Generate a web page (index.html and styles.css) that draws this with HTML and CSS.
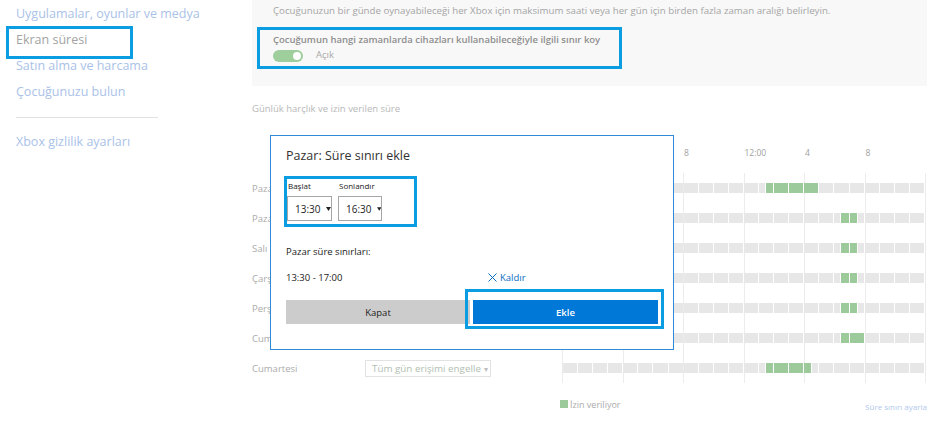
FILE: index.html
```html
<!DOCTYPE html>
<html lang="tr">
<head>
<meta charset="utf-8">
<title>Ekran süresi</title>
<link rel="stylesheet" href="styles.css">
</head>
<body>
<div class="page">
  <nav class="sidenav">
    <a class="nav-link">Uygulamalar, oyunlar ve medya</a>
    <a class="nav-link is-current">Ekran süresi</a>
    <a class="nav-link">Satın alma ve harcama</a>
    <a class="nav-link">Çocuğunuzu bulun</a>
    <hr class="nav-divider">
    <a class="nav-link">Xbox gizlilik ayarları</a>
  </nav>

  <main class="main">
    <section class="panel">
      <p class="panel-desc">Çocuğunuzun bir günde oynayabileceği her Xbox için maksimum saati veya her gün için birden fazla zaman aralığı belirleyin.</p>
      <div class="limit-box">
        <div class="limit-title">Çocuğumun hangi zamanlarda cihazları kullanabileceğiyle ilgili sınır koy</div>
        <div class="toggle-row">
          <span class="toggle"><span class="toggle-knob"></span></span>
          <span class="toggle-label">Açık</span>
        </div>
      </div>
    </section>

    <h2 class="section-title">Günlük harçlık ve izin verilen süre</h2>

    <div class="schedule">
      <div class="schedule-head">
        <span></span>
        <span></span>
        <div class="hours"><span>12:00</span><span>4</span><span>8</span><span>12:00</span><span>4</span><span>8</span></div>
      </div>

      <div class="day-row is-covered">
        <span class="day-name">Pazar</span>
        <span class="day-select">Tüm gün erişimi engelle <span class="caret">▾</span></span>
        <div class="timeline"><i></i><i></i><i></i><i></i><i></i><i></i><i></i><i></i><i></i><i></i><i></i><i></i><i></i><i class="hg"></i><i class="g"></i><i class="g"></i><i class="g"></i><i></i><i></i><i></i><i></i><i></i><i></i><i></i></div>
      </div>
      <div class="day-row is-covered">
        <span class="day-name">Pazartesi</span>
        <span class="day-select">Tüm gün erişimi engelle <span class="caret">▾</span></span>
        <div class="timeline"><i></i><i></i><i></i><i></i><i></i><i></i><i></i><i></i><i></i><i></i><i></i><i></i><i></i><i></i><i></i><i></i><i></i><i></i><i class="hg"></i><i class="gh"></i><i></i><i></i><i></i><i></i></div>
      </div>
      <div class="day-row is-covered">
        <span class="day-name">Salı</span>
        <span class="day-select">Tüm gün erişimi engelle <span class="caret">▾</span></span>
        <div class="timeline"><i></i><i></i><i></i><i></i><i></i><i></i><i></i><i></i><i></i><i></i><i></i><i></i><i></i><i></i><i></i><i></i><i></i><i></i><i class="hg"></i><i class="gh"></i><i></i><i></i><i></i><i></i></div>
      </div>
      <div class="day-row is-covered">
        <span class="day-name">Çarşamba</span>
        <span class="day-select">Tüm gün erişimi engelle <span class="caret">▾</span></span>
        <div class="timeline"><i></i><i></i><i></i><i></i><i></i><i></i><i></i><i></i><i></i><i></i><i></i><i></i><i></i><i></i><i></i><i></i><i></i><i></i><i class="hg"></i><i class="gh"></i><i></i><i></i><i></i><i></i></div>
      </div>
      <div class="day-row is-covered">
        <span class="day-name">Perşembe</span>
        <span class="day-select">Tüm gün erişimi engelle <span class="caret">▾</span></span>
        <div class="timeline"><i></i><i></i><i></i><i></i><i></i><i></i><i></i><i></i><i></i><i></i><i></i><i></i><i></i><i></i><i></i><i></i><i></i><i></i><i class="hg"></i><i class="gh"></i><i></i><i></i><i></i><i></i></div>
      </div>
      <div class="day-row is-covered">
        <span class="day-name">Cuma</span>
        <span class="day-select">Tüm gün erişimi engelle <span class="caret">▾</span></span>
        <div class="timeline"><i></i><i></i><i></i><i></i><i></i><i></i><i></i><i></i><i></i><i></i><i></i><i></i><i></i><i></i><i></i><i></i><i></i><i></i><i class="hg"></i><i class="g"></i><i></i><i></i><i></i><i></i></div>
      </div>
      <div class="day-row">
        <span class="day-name">Cumartesi</span>
        <span class="day-select">Tüm gün erişimi engelle <span class="caret">▾</span></span>
        <div class="timeline"><i></i><i></i><i></i><i></i><i></i><i></i><i></i><i></i><i></i><i></i><i></i><i></i><i></i><i class="hg"></i><i class="g"></i><i class="g"></i><i class="gh"></i><i></i><i></i><i></i><i></i><i></i><i></i><i></i></div>
      </div>
    </div>

    <div class="legend">
      <span class="legend-key"><span class="legend-swatch"></span>İzin veriliyor</span>
      <a class="legend-link">Süre sınırı ayarla</a>
    </div>
  </main>

  <div class="dialog" role="dialog">
    <h1 class="dialog-title">Pazar: Süre sınırı ekle</h1>
    <div class="time-fields">
      <div class="field field-start">
        <span class="field-label">Başlat</span>
        <span class="select">13:30<svg class="select-caret" width="5" height="4" viewBox="0 0 5 4"><polygon points="0,0 5,0 2.5,4" fill="#222"/></svg></span>
      </div>
      <div class="field field-end">
        <span class="field-label">Sonlandır</span>
        <span class="select">16:30<svg class="select-caret" width="5" height="4" viewBox="0 0 5 4"><polygon points="0,0 5,0 2.5,4" fill="#222"/></svg></span>
      </div>
    </div>
    <p class="limits-title">Pazar süre sınırları:</p>
    <div class="limit-item">
      <span class="limit-range">13:30 - 17:00</span>
      <a class="remove-link"><svg width="9" height="9" viewBox="0 0 9 9"><path d="M0.5 0.5 L8.5 8.5 M8.5 0.5 L0.5 8.5" stroke="#0b6cc2" stroke-width="1" fill="none"/></svg>Kaldır</a>
    </div>
    <div class="dialog-actions">
      <button class="btn btn-secondary">Kapat</button>
      <button class="btn btn-primary">Ekle</button>
    </div>
  </div>
</div>
</body>
</html>
```

FILE: styles.css
```css
* { box-sizing: border-box; }

html, body {
  margin: 0;
  padding: 0;
  background: #fff;
}

body {
  font-family: "Open Sans", "Noto Sans", sans-serif;
  color: #a8a8a8;
  width: 948px;
  height: 429px;
  overflow: hidden;
}

.page {
  position: relative;
  display: flex;
  width: 948px;
  height: 429px;
}

/* ---------- side navigation ---------- */
.sidenav {
  width: 240px;
  flex: none;
  display: flex;
  flex-direction: column;
  padding: 1px 0 0 16px;
}

.nav-link {
  display: block;
  position: relative;
  height: 26px;
  line-height: 26px;
  font-size: 12.5px;
  color: #a9c2e8;
  text-decoration: none;
  white-space: nowrap;
}

.nav-link.is-current { color: #a3a3a3; }

.nav-link.is-current::after {
  content: "";
  position: absolute;
  left: -10px;
  top: -1px;
  width: 121px;
  height: 27px;
  border: 3px solid #0b9de2;
}

.nav-divider {
  width: 142px;
  height: 0;
  margin: 12px 0 11px;
  border: 0;
  border-top: 1px solid #e2e2e2;
}

/* ---------- main column ---------- */
.main {
  width: 675px;
  flex: none;
  margin-left: 12px;
}

.panel {
  background: #f8f8f8;
  height: 86px;
  padding-top: 3px;
}

.panel-desc {
  margin: 0 0 0 21px;
  font-size: 9.7px;
  line-height: 16px;
  color: #a5a5a5;
  white-space: nowrap;
}

.limit-box {
  margin: 8px 0 0 5px;
  width: 365px;
  height: 42px;
  border: 3px solid #0b9de2;
  padding: 2px 0 0 13px;
}

.limit-title {
  font-size: 9.5px;
  font-weight: 600;
  line-height: 16px;
  color: #8e8e8e;
  white-space: nowrap;
}

.toggle-row {
  display: flex;
  align-items: center;
  height: 13px;
  margin-top: 1px;
}

.toggle {
  display: flex;
  justify-content: flex-end;
  align-items: center;
  width: 30px;
  height: 12px;
  padding: 0 2px;
  border-radius: 6px;
  background: #9dce9c;
}

.toggle-knob {
  width: 8px;
  height: 8px;
  border-radius: 50%;
  background: #fff;
}

.toggle-label {
  margin-left: 13px;
  margin-top: -3px;
  font-size: 9.5px;
  color: #a8a8a8;
}

.section-title {
  margin: 16px 0 0;
  font-size: 9.5px;
  line-height: 14px;
  font-weight: 400;
  color: #b8b8b8;
}

/* ---------- schedule ---------- */
.schedule { margin-top: 27px; }

.schedule-head,
.day-row {
  display: grid;
  grid-template-columns: 113px 197px 364px;
}

.schedule-head {
  height: 20px;
  margin-bottom: 10px;
}

.hours {
  display: grid;
  grid-template-columns: repeat(6, 60.5px);
  font-size: 8.5px;
  line-height: 20px;
  color: #a0a0a0;
}

.hours span { padding-left: 1px; }

.day-row {
  height: 30px;
  align-items: center;
}

.day-name {
  font-size: 9.5px;
  color: #ababab;
}

.day-select {
  display: flex;
  align-items: center;
  width: 126px;
  height: 17px;
  padding: 0 5px 0 6px;
  border: 1px solid #e2e2e2;
  font-size: 9.8px;
  color: #b1beb1;
  white-space: nowrap;
}

/* the modal dialog hides these controls completely */
.day-row.is-covered .day-select { visibility: hidden; }

.caret {
  margin-left: 3px;
  font-size: 8px;
  color: #bdbdbd;
}

.timeline {
  align-self: stretch;
  display: grid;
  grid-template-columns: repeat(24, 1fr);
  column-gap: 1px;
  width: 364px;
  padding: 10px 2px 10px 1px;
  background: repeating-linear-gradient(to right, #ececec 0 1px, transparent 1px 60.5px);
}

.timeline i {
  display: block;
  background: #e7e7e7;
}

.timeline i.g { background: #9dca9b; }

.timeline i.hg {
  background: linear-gradient(to right, #e7e7e7 0 calc(50% - 1px), #fff calc(50% - 1px) 50%, #9dca9b 50%);
}

.timeline i.gh {
  background: linear-gradient(to right, #9dca9b 0 50%, #fff 50% calc(50% + 1px), #e7e7e7 calc(50% + 1px));
}

/* ---------- legend ---------- */
.legend {
  display: flex;
  justify-content: space-between;
  align-items: center;
  height: 14px;
  margin-top: 14px;
  padding-left: 308px;
}

.legend-key {
  display: flex;
  align-items: center;
  font-size: 9px;
  color: #ababab;
}

.legend-swatch {
  width: 8px;
  height: 8px;
  margin-right: 2px;
  background: #9dca9b;
}

.legend-link {
  margin-top: 4px;
  font-size: 8px;
  color: #b0c8ee;
}

/* ---------- dialog ---------- */
.dialog {
  position: absolute;
  left: 270px;
  top: 135px;
  width: 404px;
  height: 215px;
  padding: 11px 15px 0 15px;
  background: #fff;
  border: 1px solid #2f8bd8;
  color: #222;
}

.dialog-title {
  margin: 0;
  font-size: 12.5px;
  font-weight: 400;
  line-height: 18px;
  color: #333;
}

.time-fields {
  display: flex;
  gap: 6px;
  width: 133px;
  height: 51px;
  margin: 11px 0 0 -2px;
  border: 3px solid #0b9de2;
}

.field {
  display: flex;
  flex-direction: column;
}

.field-label {
  padding-left: 1px;
  font-size: 8px;
  line-height: 14px;
  color: #222;
}

.select {
  display: flex;
  align-items: center;
  height: 25px;
  margin-top: 3px;
  padding-left: 7px;
  border: 1px solid #a6a6a6;
  font-size: 10px;
  color: #222;
}

.field-start .select { width: 45px; }
.field-end .select { width: 44px; }

.select-caret { margin-left: 5px; }

.limits-title {
  margin: 17px 0 0;
  font-size: 9.5px;
  line-height: 16px;
  color: #222;
}

.limit-item {
  display: flex;
  align-items: center;
  height: 16px;
  margin-top: 9px;
}

.limit-range {
  width: 202px;
  font-size: 9.5px;
  color: #222;
}

.remove-link {
  display: inline-flex;
  align-items: center;
  gap: 3px;
  font-size: 9.5px;
  color: #0b6cc2;
}

.dialog-actions {
  display: flex;
  gap: 3px;
  margin-top: 15px;
}

.btn {
  height: 24px;
  padding: 0;
  border: 0;
  font-family: inherit;
  font-size: 9.5px;
}

.btn-secondary {
  width: 184px;
  background: #cccccc;
  color: #222;
}

.btn-primary {
  position: relative;
  width: 185px;
  background: #0078d7;
  color: #fff;
  font-weight: 600;
}

.btn-primary::after {
  content: "";
  position: absolute;
  top: -11px;
  left: -8px;
  right: -6px;
  bottom: -5px;
  border: 3px solid #0b9de2;
}
```
